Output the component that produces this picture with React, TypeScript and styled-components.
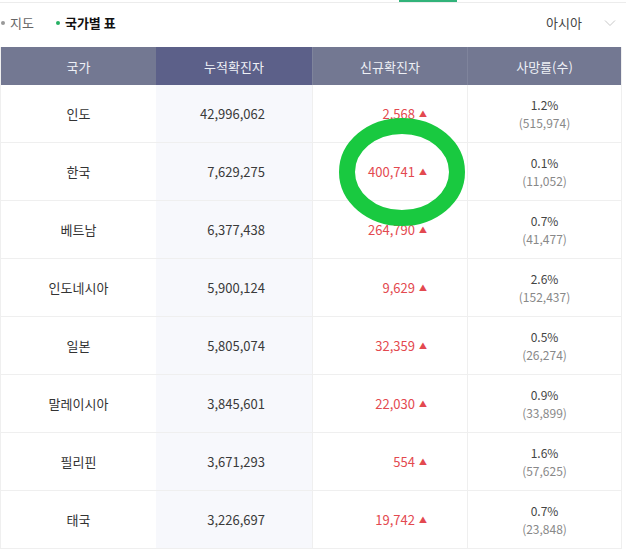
import React from 'react'
import styled, { createGlobalStyle } from 'styled-components'

const GlobalStyle = createGlobalStyle`
  body {
    margin: 0;
    background: #ffffff;
    font-family: 'Noto Sans CJK KR', 'Noto Sans', sans-serif;
  }
`

type Row = {
  country: string
  total: string
  fresh: string
  rate: string
  deaths: string
}

const rows: Row[] = [
  { country: '인도', total: '42,996,062', fresh: '2,568', rate: '1.2%', deaths: '(515,974)' },
  { country: '한국', total: '7,629,275', fresh: '400,741', rate: '0.1%', deaths: '(11,052)' },
  { country: '베트남', total: '6,377,438', fresh: '264,790', rate: '0.7%', deaths: '(41,477)' },
  { country: '인도네시아', total: '5,900,124', fresh: '9,629', rate: '2.6%', deaths: '(152,437)' },
  { country: '일본', total: '5,805,074', fresh: '32,359', rate: '0.5%', deaths: '(26,274)' },
  { country: '말레이시아', total: '3,845,601', fresh: '22,030', rate: '0.9%', deaths: '(33,899)' },
  { country: '필리핀', total: '3,671,293', fresh: '554', rate: '1.6%', deaths: '(57,625)' },
  { country: '태국', total: '3,226,697', fresh: '19,742', rate: '0.7%', deaths: '(23,848)' },
]

const App = () => {
  return (
    <Page>
      <GlobalStyle />
      <TopLine>
        <ActiveLine />
      </TopLine>
      <TabBar>
        <Tabs>
          <Tab>
            <Dot />
            지도
          </Tab>
          <Tab active>
            <Dot active />
            국가별 표
          </Tab>
        </Tabs>
        <Region>
          <span>아시아</span>
          <Chevron viewBox="0 0 12 8">
            <path d="M1 1.5l5 5 5-5" fill="none" stroke="#c8c8c8" strokeWidth="1" />
          </Chevron>
        </Region>
      </TabBar>

      <Table>
        <HeadRow>
          <HeadCell>국가</HeadCell>
          <HeadCell highlight>누적확진자</HeadCell>
          <HeadCell>신규확진자</HeadCell>
          <HeadCell>사망률(수)</HeadCell>
        </HeadRow>
        {rows.map((r) => (
          <BodyRow key={r.country}>
            <Cell>{r.country}</Cell>
            <NumberCell>{r.total}</NumberCell>
            <NewCell>
              {r.fresh}
              <Up>▲</Up>
            </NewCell>
            <RateCell>
              <Rate>{r.rate}</Rate>
              <Deaths>{r.deaths}</Deaths>
            </RateCell>
          </BodyRow>
        ))}
        <Marker viewBox="0 0 140 120">
          <ellipse cx="63" cy="54" rx="55" ry="46" fill="none" stroke="#19c940" strokeWidth="16" />
        </Marker>
      </Table>
    </Page>
  )
}

const Page = styled.div`
  width: 626px;
  height: 557px;
  overflow: hidden;
  background: #fff;
`

const TopLine = styled.div`
  height: 2px;
  border-bottom: 1px solid #ececec;
  position: relative;
`

const ActiveLine = styled.div`
  position: absolute;
  left: 399px;
  top: 0;
  width: 58px;
  height: 2px;
  background: #31b37a;
`

const TabBar = styled.div`
  height: 44px;
  display: flex;
  align-items: center;
  justify-content: space-between;
  padding: 0 10px 5px 1px;
  box-sizing: border-box;
`

const Tabs = styled.div`
  display: flex;
  align-items: center;
  gap: 22px;
`

const Tab = styled.div<{ active?: boolean }>`
  display: flex;
  align-items: center;
  gap: 5px;
  font-size: 13px;
  color: ${(p) => (p.active ? '#111' : '#666')};
  font-weight: ${(p) => (p.active ? 700 : 400)};
`

const Dot = styled.span<{ active?: boolean }>`
  width: 4px;
  height: 4px;
  border-radius: 50%;
  background: ${(p) => (p.active ? '#25b063' : '#999')};
`

const Region = styled.div`
  display: flex;
  align-items: center;
  gap: 22px;
  font-size: 13px;
  color: #444;
`

const Chevron = styled.svg`
  width: 12px;
  height: 8px;
`

const Table = styled.div`
  position: relative;
  width: 622px;
  border-left: 1px solid #efefef;
  border-right: 1px solid #efefef;
  box-sizing: border-box;
`

const grid = `
  display: grid;
  grid-template-columns: 155px 156px 155px 1fr;
`

const HeadRow = styled.div`
  ${grid}
  height: 38px;
  background: #737892;
`

const HeadCell = styled.div<{ highlight?: boolean }>`
  display: flex;
  align-items: center;
  justify-content: center;
  font-size: 13px;
  color: #eef0f6;
  background: ${(p) => (p.highlight ? '#5c6089' : 'transparent')};
  border-left: ${(p) => (p.highlight ? 'none' : '1px solid #7f849c')};
  &:first-child {
    border-left: none;
  }
`

const BodyRow = styled.div`
  ${grid}
  height: 58px;
  border-bottom: 1px solid #efefef;
  box-sizing: border-box;
`

const Cell = styled.div`
  display: flex;
  align-items: center;
  justify-content: center;
  font-size: 13px;
  color: #333;
`

const NumberCell = styled(Cell)`
  justify-content: flex-end;
  padding-right: 47px;
  background: #f7f8fc;
  color: #3a3a3a;
`

const NewCell = styled(Cell)`
  justify-content: flex-end;
  padding-right: 40px;
  color: #e3494f;
  border-left: 1px solid #efefef;
`

const Up = styled.span`
  font-size: 8px;
  margin-left: 4px;
  color: #e3494f;
`

const RateCell = styled(Cell)`
  flex-direction: column;
  font-size: 12px;
  border-left: 1px solid #efefef;
`

const Rate = styled.div`
  line-height: 18px;
  color: #444;
`

const Deaths = styled(Rate)`
  color: #888;
`

const Marker = styled.svg`
  position: absolute;
  left: 338px;
  top: 71px;
  width: 140px;
  height: 120px;
  pointer-events: none;
`

export default App
